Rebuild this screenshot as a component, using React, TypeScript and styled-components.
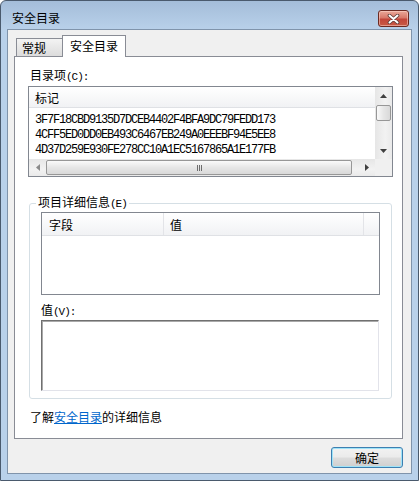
import React from 'react';
import styled, { createGlobalStyle } from 'styled-components';

const GlobalStyle = createGlobalStyle`
  html, body {
    margin: 0;
    padding: 0;
    background: #ffffff;
  }
  body {
    font-family: "Noto Sans CJK SC", "Noto Sans", sans-serif;
    font-size: 12px;
    color: #000;
  }
  * {
    box-sizing: border-box;
  }
`;

const Window = styled.div`
  width: 419px;
  height: 481px;
  border: 1px solid #4a5a6d;
  border-radius: 6px 6px 0 0;
  background: linear-gradient(#a4bdd9 0px, #b9d1ea 29px, #b9d1ea 100%);
  display: flex;
  flex-direction: column;
  overflow: hidden;
`;

const TitleBar = styled.div`
  height: 29px;
  flex-shrink: 0;
  display: flex;
  align-items: flex-start;
  justify-content: space-between;
  padding: 9px 9px 0 11px;
`;

const TitleText = styled.span`
  line-height: 16px;
  font-size: 12px;
`;

const CloseButton = styled.div`
  width: 31px;
  height: 17px;
  border: 1px solid #6b2a22;
  border-radius: 3px;
  background: linear-gradient(#e9a899 0%, #d8796a 45%, #c2463a 55%, #c85a45 100%);
  box-shadow: inset 0 0 0 1px rgba(255, 220, 210, 0.5);
  display: flex;
  align-items: center;
  justify-content: center;
`;

const Client = styled.div`
  flex: 1;
  margin: 0 7px 7px;
  background: #f0f0f0;
  box-shadow: 0 0 0 1px #8094ab;
  padding-top: 5px;
  display: flex;
  flex-direction: column;
`;

const TabStrip = styled.div`
  height: 22px;
  display: flex;
  align-items: flex-end;
  padding-left: 8px;
  margin-bottom: -1px;
  position: relative;
  z-index: 1;
`;

const Tab = styled.div<{ $active?: boolean }>`
  border: 1px solid #898c95;
  border-bottom: none;
  line-height: 16px;
  ${(p) =>
    p.$active
      ? `
    width: 64px;
    height: 22px;
    margin-left: -1px;
    background: #ffffff;
    text-align: center;
    padding-top: 2px;
  `
      : `
    width: 47px;
    height: 18px;
    margin-bottom: 1px;
    background: linear-gradient(#f3f3f3, #dcdcdc);
    padding: 1px 0 0 5px;
  `}
`;

const Panel = styled.div`
  height: 383px;
  margin: 0 8px 0 6px;
  background: #ffffff;
  border: 1px solid #898c95;
  padding: 10px 0 0 13px;
  display: flex;
  flex-direction: column;
`;

const Label = styled.div<{ $indent?: number }>`
  line-height: 16px;
  margin-left: ${(p) => p.$indent ?? 0}px;
`;

const Hint = styled.span`
  font-family: "Liberation Mono", monospace;
  font-size: 11px;
  letter-spacing: -1px;
`;

const ListBox = styled.div`
  width: 365px;
  height: 91px;
  margin-top: 1px;
  border: 1px solid #828790;
  display: grid;
  grid-template-columns: 1fr 17px;
  grid-template-rows: 1fr 17px;
  overflow: hidden;
`;

const ListBody = styled.div`
  overflow: hidden;
`;

const HeaderRow = styled.div<{ $height: number }>`
  height: ${(p) => p.$height}px;
  border-bottom: 1px solid #dfe1e5;
  background: linear-gradient(#ffffff, #f1f2f4);
  display: flex;
  align-items: center;
`;

const HeaderCell = styled.div<{ $width?: number; $pad?: number }>`
  ${(p) => (p.$width ? `width: ${p.$width}px;` : 'flex: 1;')}
  height: 100%;
  padding-left: ${(p) => p.$pad ?? 6}px;
  display: flex;
  align-items: center;
  padding-top: 1px;
  border-right: 1px solid #e3e4e8;
  &:last-child {
    border-right: none;
  }
`;

const Rows = styled.div`
  padding-top: 5px;
`;

const HexRow = styled.div`
  height: 15px;
  line-height: 15px;
  padding-left: 6px;
  font-family: "Liberation Mono", monospace;
  font-size: 12px;
  letter-spacing: -1.2px;
  white-space: nowrap;
`;

const VScroll = styled.div`
  display: flex;
  flex-direction: column;
  background: linear-gradient(to right, #e6e6e6, #f2f2f2 60%, #eaeaea);
`;

const HScroll = styled.div`
  display: flex;
  align-items: stretch;
  background: linear-gradient(#e6e6e6, #f2f2f2 60%, #eaeaea);
`;

const ScrollButton = styled.div`
  width: 17px;
  height: 17px;
  flex-shrink: 0;
  display: flex;
  align-items: center;
  justify-content: center;
`;

const Thumb = styled.div<{ $horizontal?: boolean }>`
  border: 1px solid #979797;
  border-radius: 2px;
  display: flex;
  align-items: center;
  justify-content: center;
  ${(p) =>
    p.$horizontal
      ? `
    width: 306px;
    margin: 1px 0;
    background: linear-gradient(#fafafa, #e6e6e6 50%, #d9d9d9);
  `
      : `
    height: 16px;
    margin: 1px 1px 0;
    background: linear-gradient(to right, #fafafa, #e6e6e6 50%, #d9d9d9);
  `}
`;

const Grip = styled.div`
  display: flex;
  gap: 1px;
  & > span {
    width: 1px;
    height: 6px;
    background: #6d6d6d;
  }
`;

const Spacer = styled.div`
  flex: 1;
`;

const Corner = styled.div`
  background: #f0f0f0;
`;

const GroupBox = styled.fieldset`
  width: 363px;
  margin: 18px 0 0 1px;
  padding: 1px 11px 7px;
  border: 1px solid #d5dfe5;
  border-radius: 3px;
  min-width: 0;
`;

const Legend = styled.legend`
  margin-left: -5px;
  padding: 0 2px;
  line-height: 14px;
`;

const DetailList = styled.div`
  width: 339px;
  height: 83px;
  border: 1px solid #828790;
`;

const ValueLabel = styled(Label)`
  margin-top: 7px;
`;

const TextArea = styled.div`
  width: 338px;
  height: 71px;
  border: 1px solid;
  border-color: #707070 #e2e3ea #e2e3ea #707070;
  box-shadow: inset 1px 1px 0 #a9a9a9;
  background: #ffffff;
`;

const InfoLine = styled.div`
  margin: 10px 0 0 2px;
  line-height: 16px;
`;

const Link = styled.a`
  color: #0066cc;
  text-decoration: underline;
`;

const Footer = styled.div`
  display: flex;
  justify-content: flex-end;
  padding: 8px 8px 0 0;
`;

const Button = styled.div`
  width: 72px;
  height: 21px;
  border: 1px solid #3c7fb1;
  border-radius: 3px;
  background: linear-gradient(#f2f2f2 0%, #ebebeb 48%, #dddddd 52%, #cfcfcf 100%);
  box-shadow: inset 0 0 0 1px #9fe3f8;
  display: flex;
  align-items: center;
  justify-content: center;
  line-height: 16px;
`;

type Dir = 'up' | 'down' | 'left' | 'right';

const arrowPoints: Record<Dir, string> = {
  up: '0,4 3.5,0 7,4',
  down: '0,0 7,0 3.5,4',
  left: '4,0 4,7 0,3.5',
  right: '0,0 0,7 4,3.5',
};

const Arrow = ({ dir, color = '#404040' }: { dir: Dir; color?: string }) => {
  const vertical = dir === 'up' || dir === 'down';
  const w = vertical ? 7 : 4;
  const h = vertical ? 4 : 7;
  return (
    <svg width={w} height={h} viewBox={`0 0 ${w} ${h}`}>
      <polygon points={arrowPoints[dir]} fill={color} />
    </svg>
  );
};

const CloseGlyph = () => (
  <svg width="13" height="10" viewBox="0 0 13 10">
    <path d="M2.5 1.5 L10.5 8.5 M10.5 1.5 L2.5 8.5" stroke="#5a3a36" strokeWidth="3.6" strokeLinecap="round" />
    <path d="M2.5 1.5 L10.5 8.5 M10.5 1.5 L2.5 8.5" stroke="#ffffff" strokeWidth="2" strokeLinecap="round" />
  </svg>
);

const hashes = [
  '3F7F18CBD9135D7DCEB4402F4BFA9DC79FEDD173',
  '4CFF5ED0DD0EB493C6467EB249A0EEEBF94E5EE8',
  '4D37D259E930FE278CC10A1EC5167865A1E177FB',
];

export default function App() {
  return (
    <>
      <GlobalStyle />
      <Window>
        <TitleBar>
          <TitleText>安全目录</TitleText>
          <CloseButton>
            <CloseGlyph />
          </CloseButton>
        </TitleBar>
        <Client>
          <TabStrip>
            <Tab>常规</Tab>
            <Tab $active>安全目录</Tab>
          </TabStrip>
          <Panel>
            <Label $indent={2}>
              目录项<Hint>(C):</Hint>
            </Label>
            <ListBox>
              <ListBody>
                <HeaderRow $height={21}>
                  <HeaderCell>标记</HeaderCell>
                </HeaderRow>
                <Rows>
                  {hashes.map((h) => (
                    <HexRow key={h}>{h}</HexRow>
                  ))}
                </Rows>
              </ListBody>
              <VScroll>
                <ScrollButton>
                  <Arrow dir="up" />
                </ScrollButton>
                <Thumb />
                <Spacer />
                <ScrollButton>
                  <Arrow dir="down" />
                </ScrollButton>
              </VScroll>
              <HScroll>
                <ScrollButton>
                  <Arrow dir="left" color="#8a8a8a" />
                </ScrollButton>
                <Thumb $horizontal>
                  <Grip>
                    <span />
                    <span />
                    <span />
                  </Grip>
                </Thumb>
                <Spacer />
                <ScrollButton>
                  <Arrow dir="right" />
                </ScrollButton>
              </HScroll>
              <Corner />
            </ListBox>
            <GroupBox>
              <Legend>
                项目详细信息<Hint>(E)</Hint>
              </Legend>
              <DetailList>
                <HeaderRow $height={23}>
                  <HeaderCell $width={122} $pad={7}>
                    字段
                  </HeaderCell>
                  <HeaderCell $width={200} $pad={6}>
                    值
                  </HeaderCell>
                  <HeaderCell />
                </HeaderRow>
              </DetailList>
              <ValueLabel>
                值<Hint>(V):</Hint>
              </ValueLabel>
              <TextArea />
            </GroupBox>
            <InfoLine>
              了解<Link>安全目录</Link>的详细信息
            </InfoLine>
          </Panel>
          <Footer>
            <Button>确定</Button>
          </Footer>
        </Client>
      </Window>
    </>
  );
}
